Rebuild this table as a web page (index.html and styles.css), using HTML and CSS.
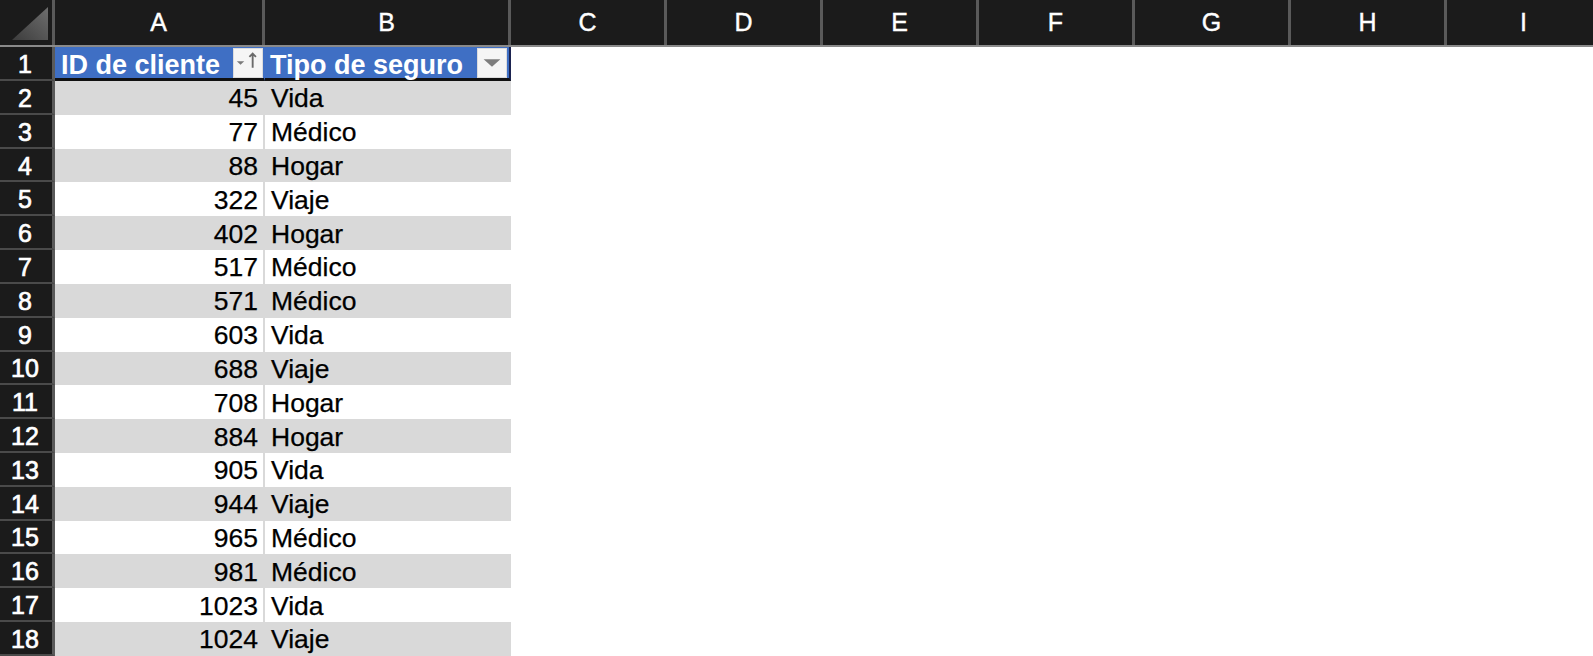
FILE: index.html
```html
<!DOCTYPE html>
<html lang="es">
<head>
<meta charset="utf-8">
<title>Hoja</title>
<link rel="stylesheet" href="styles.css">
</head>
<body>
<div class="sheet">
  <div class="colheads">
    <div class="corner">
      <svg class="corner-tri" width="52" height="45" viewBox="0 0 52 45">
        <defs>
          <linearGradient id="tg" x1="0" y1="1" x2="1" y2="0">
            <stop offset="0" stop-color="#3c3c3c"/>
            <stop offset="1" stop-color="#6e6e6e"/>
          </linearGradient>
        </defs>
        <polygon points="12,40 48,40 48,7" fill="url(#tg)"/>
      </svg>
    </div>
    <div class="colh col-a">A</div>
    <div class="colh col-b">B</div>
    <div class="colh col-x">C</div>
    <div class="colh col-x">D</div>
    <div class="colh col-x">E</div>
    <div class="colh col-x">F</div>
    <div class="colh col-x">G</div>
    <div class="colh col-x">H</div>
    <div class="colh col-x">I</div>
  </div>

  <div class="row row-head">
    <div class="rowh">1</div>
    <div class="cell col-a th">
      <span>ID de cliente</span>
      <span class="filter">
        <svg width="30" height="30" viewBox="0 0 30 30">
          <polygon points="3,13 11,13 7,17" fill="#7a7a7a"/>
          <path d="M20 5 L20 20 M16.5 8.5 L20 5 L23.5 8.5" stroke="#6a6a6a" stroke-width="2" fill="none"/>
        </svg>
      </span>
    </div>
    <div class="cell col-b th">
      <span>Tipo de seguro</span>
      <span class="filter">
        <svg width="30" height="30" viewBox="0 0 30 30">
          <polygon points="6,11 24,11 15,19" fill="#7d7d7d"/>
        </svg>
      </span>
    </div>
  </div>

  <div class="row band"><div class="rowh">2</div><div class="cell col-a num">45</div><div class="cell col-b">Vida</div></div>
  <div class="row"><div class="rowh">3</div><div class="cell col-a num">77</div><div class="cell col-b">Médico</div></div>
  <div class="row band"><div class="rowh">4</div><div class="cell col-a num">88</div><div class="cell col-b">Hogar</div></div>
  <div class="row"><div class="rowh">5</div><div class="cell col-a num">322</div><div class="cell col-b">Viaje</div></div>
  <div class="row band"><div class="rowh">6</div><div class="cell col-a num">402</div><div class="cell col-b">Hogar</div></div>
  <div class="row"><div class="rowh">7</div><div class="cell col-a num">517</div><div class="cell col-b">Médico</div></div>
  <div class="row band"><div class="rowh">8</div><div class="cell col-a num">571</div><div class="cell col-b">Médico</div></div>
  <div class="row"><div class="rowh">9</div><div class="cell col-a num">603</div><div class="cell col-b">Vida</div></div>
  <div class="row band"><div class="rowh">10</div><div class="cell col-a num">688</div><div class="cell col-b">Viaje</div></div>
  <div class="row"><div class="rowh">11</div><div class="cell col-a num">708</div><div class="cell col-b">Hogar</div></div>
  <div class="row band"><div class="rowh">12</div><div class="cell col-a num">884</div><div class="cell col-b">Hogar</div></div>
  <div class="row"><div class="rowh">13</div><div class="cell col-a num">905</div><div class="cell col-b">Vida</div></div>
  <div class="row band"><div class="rowh">14</div><div class="cell col-a num">944</div><div class="cell col-b">Viaje</div></div>
  <div class="row"><div class="rowh">15</div><div class="cell col-a num">965</div><div class="cell col-b">Médico</div></div>
  <div class="row band"><div class="rowh">16</div><div class="cell col-a num">981</div><div class="cell col-b">Médico</div></div>
  <div class="row"><div class="rowh">17</div><div class="cell col-a num">1023</div><div class="cell col-b">Vida</div></div>
  <div class="row band"><div class="rowh">18</div><div class="cell col-a num">1024</div><div class="cell col-b">Viaje</div></div>
</div>
</body>
</html>
```

FILE: styles.css
```css
* { box-sizing: border-box; }

html, body {
  margin: 0;
  padding: 0;
  background: #ffffff;
  overflow: hidden;
}

body {
  font-family: "Liberation Sans", Arial, Helvetica, sans-serif;
  width: 1593px;
  height: 656px;
}

.sheet {
  display: flex;
  flex-direction: column;
  width: 1593px;
  height: 656px;
  overflow: hidden;
}

/* column header strip */
.colheads {
  display: flex;
  height: 47px;
  flex: none;
  background: #1b1b1b;
  border-bottom: 2px solid #8a8a8a;
}

.corner {
  width: 55px;
  flex: none;
  border-right: 3px solid #5a5a5a;
  display: flex;
}

.corner-tri { display: block; }

.colh {
  flex: none;
  display: flex;
  align-items: center;
  justify-content: center;
  color: #ffffff;
  font-size: 25px;
  -webkit-text-stroke: 0.4px #ffffff;
  border-right: 3px solid #5a5a5a;
  padding-bottom: 1px;
}

.col-a { width: 210px; flex: none; }
.col-b { width: 246px; flex: none; }
.col-x { width: 156px; }

/* rows */
.row {
  display: flex;
  height: 33.82px;
  flex: none;
}

.row-head {
  height: 34px;
}

.rowh {
  width: 55px;
  flex: none;
  background: #1b1b1b;
  color: #ffffff;
  font-size: 25px;
  -webkit-text-stroke: 0.7px #ffffff;
  display: flex;
  align-items: center;
  justify-content: center;
  border-right: 3px solid #5a5a5a;
  border-bottom: 2px solid #4a4a4a;
  padding-right: 2px;
  padding-top: 3px;
}

.cell {
  display: flex;
  align-items: center;
  font-size: 26.5px;
  color: #000000;
  -webkit-text-stroke: 0.25px #000000;
  white-space: nowrap;
  padding-top: 2px;
}

.cell.col-a {
  border-right: 2px solid #d9d9d9;
}

.cell.col-b {
  padding-left: 6px;
}

.num {
  justify-content: flex-end;
  padding-right: 5px;
}

.band .cell {
  background: #d9d9d9;
}

/* table header row */
.th {
  background: #3f6fc4;
  color: #ffffff;
  font-weight: bold;
  font-size: 27px;
  -webkit-text-stroke: 0;
  justify-content: space-between;
  border-bottom: 3px solid #111111;
  padding-top: 2px;
}

.th > span:first-child {
  padding-top: 3px;
}

.cell.col-a.th {
  padding-left: 6px;
  padding-right: 1px;
  border-right: 1px solid #3f6fc4;
}

.cell.col-b.th {
  padding-left: 5px;
  padding-right: 2px;
  border-right: 2px solid #1b2350;
}

.filter {
  width: 30px;
  height: 30px;
  background: #f5f5f5;
  border: 1px solid #dcdcdc;
  display: flex;
  align-items: center;
  justify-content: center;
  margin-bottom: 2px;
}

.filter svg { display: block; }
```
